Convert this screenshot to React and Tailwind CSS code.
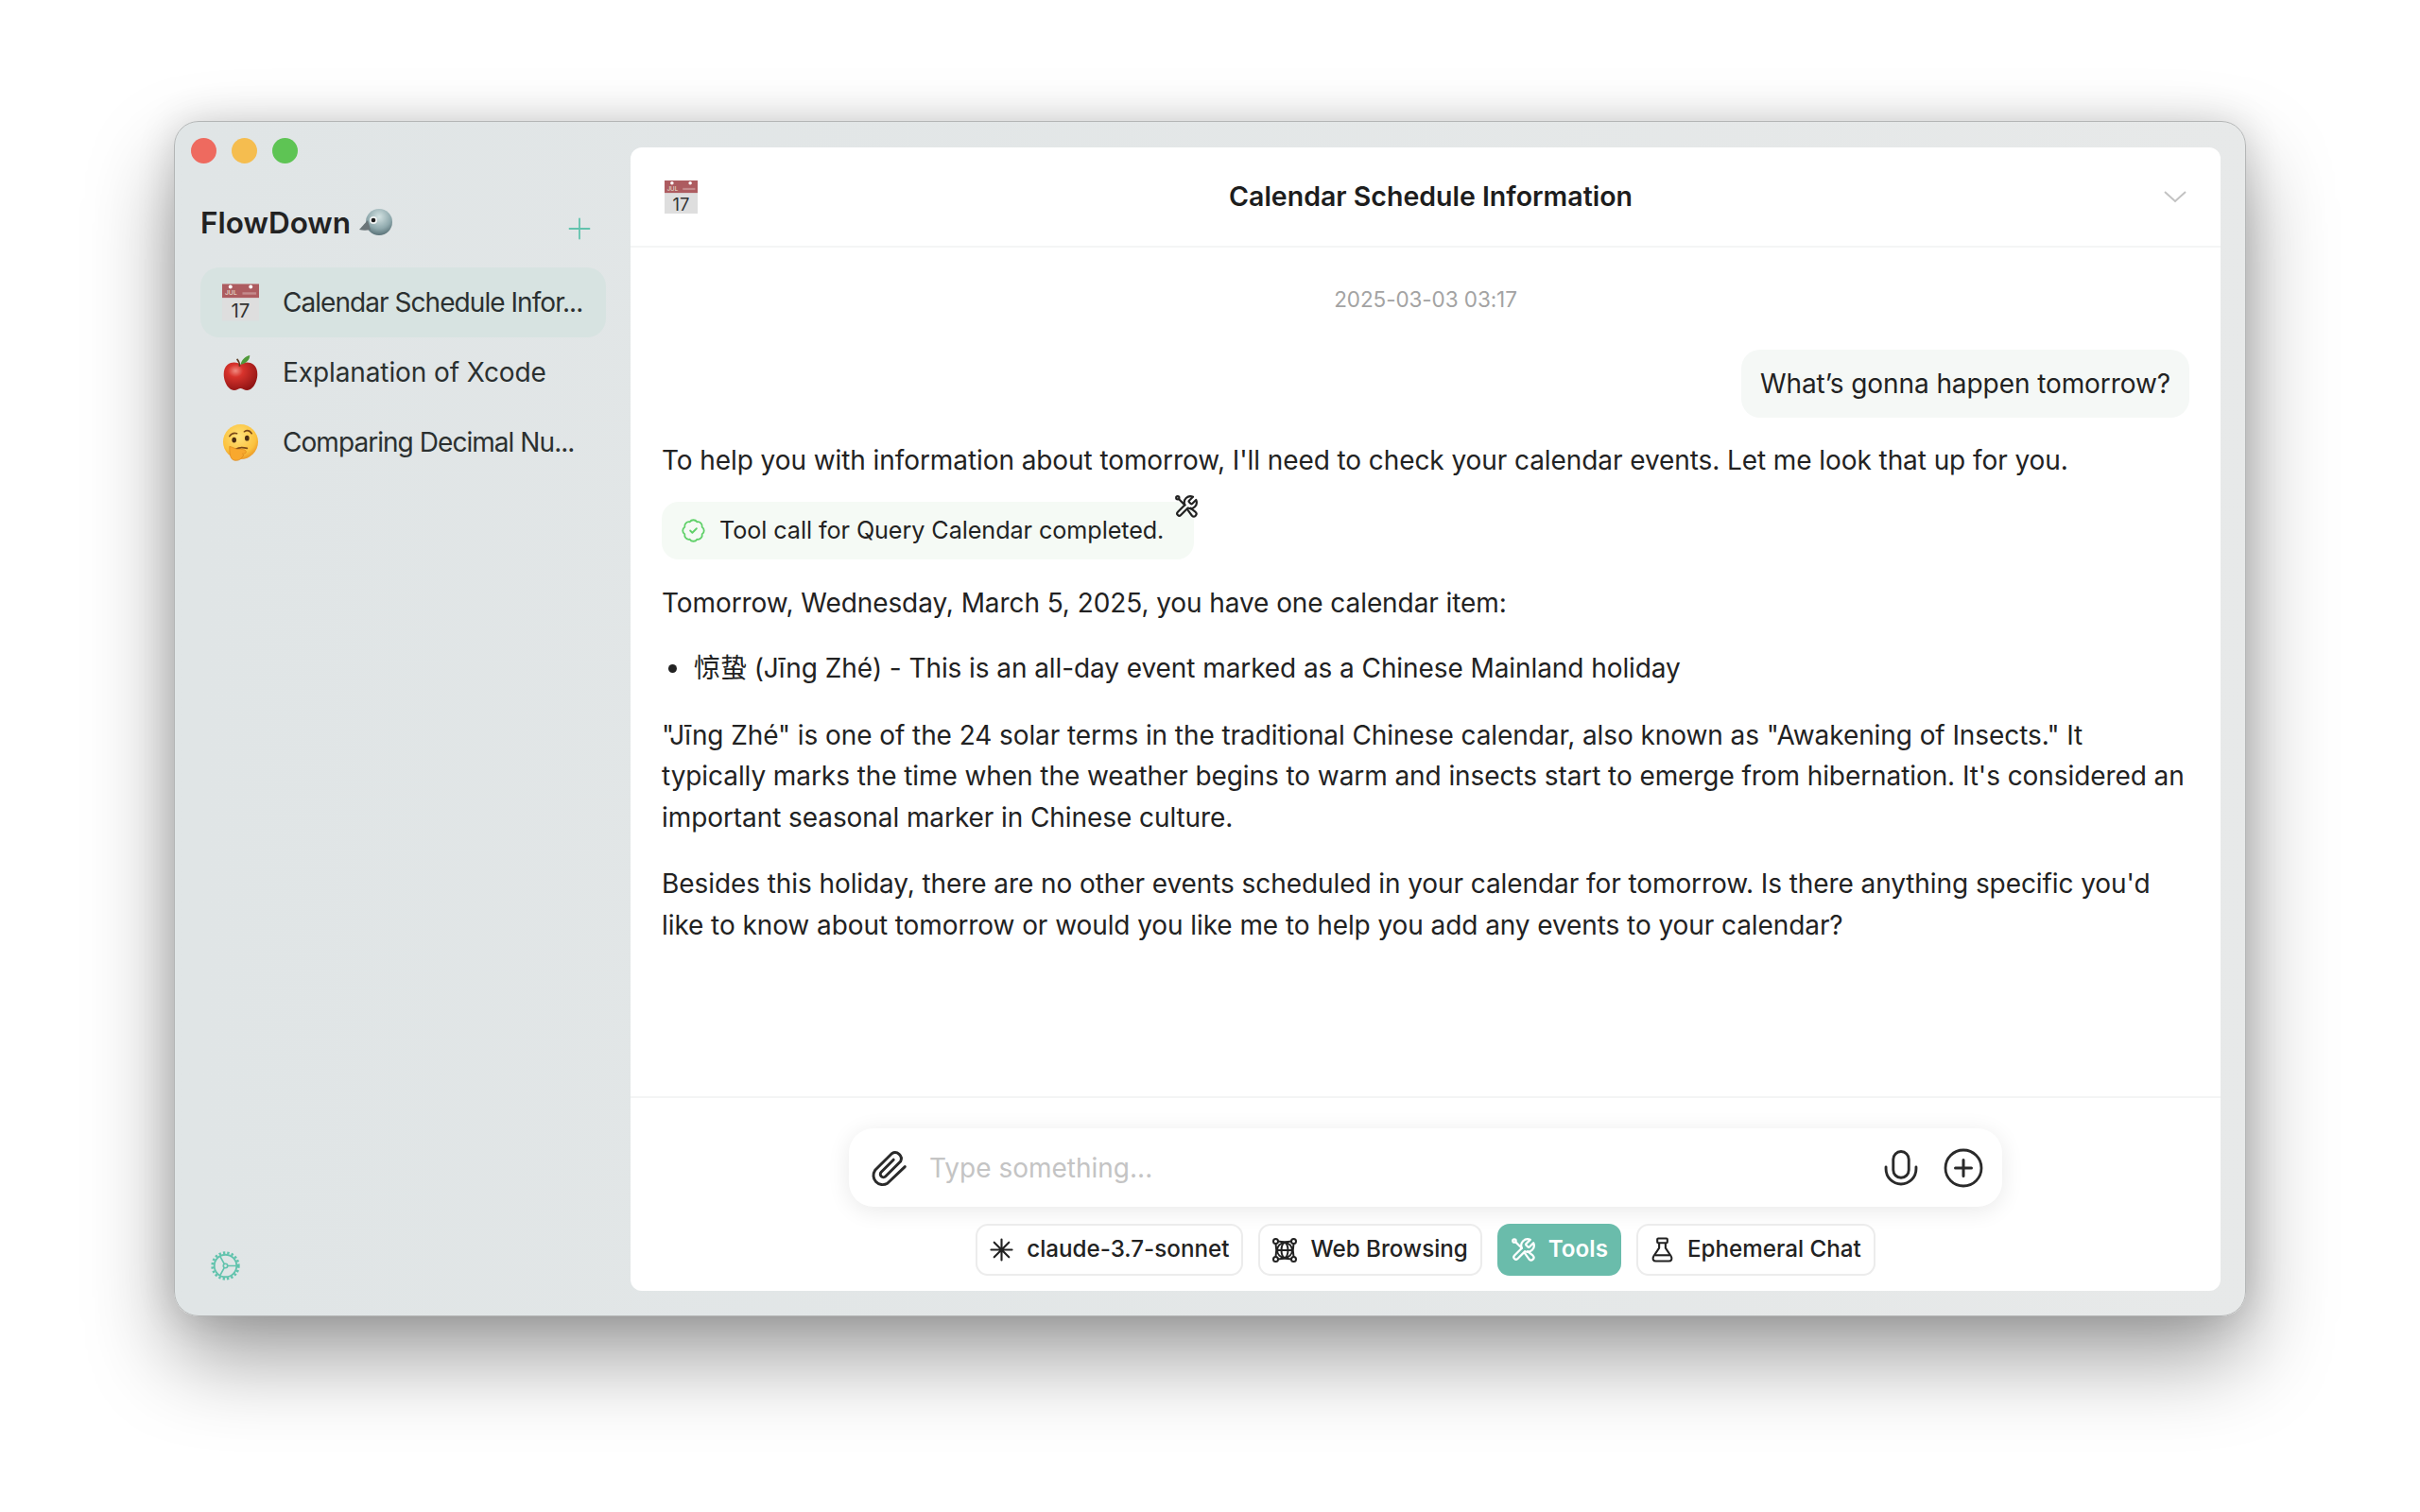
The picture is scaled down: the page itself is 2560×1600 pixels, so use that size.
import React from "react";
import { BadgeCheck, Plus } from "lucide-react";

function CalendarEmoji({ className }) {
  return (
    <svg viewBox="0 0 40 40" className={className}>
      <rect x="0" y="0" width="40" height="40" fill="#dedede" />
      <rect x="0" y="0" width="40" height="15" fill="#ad5c60" />
      <circle cx="9" cy="3" r="2" fill="#fff" />
      <circle cx="31" cy="3" r="2" fill="#fff" />
      <text x="3" y="12" fontSize="7" fill="#eed" fontFamily="Inter, sans-serif">JUL</text>
      <rect x="22" y="9" width="15" height="2.5" fill="#c48a8c" />
      <text x="20" y="36" fontSize="21" fill="#333" textAnchor="middle" fontFamily="Inter, sans-serif">17</text>
    </svg>
  );
}

function AppleEmoji({ className }) {
  return (
    <svg viewBox="0 0 40 40" className={className}>
      <defs>
        <radialGradient id="ap" cx="35%" cy="30%" r="75%">
          <stop offset="0" stopColor="#f08a80" />
          <stop offset="0.3" stopColor="#d8332c" />
          <stop offset="1" stopColor="#8f1414" />
        </radialGradient>
      </defs>
      <path d="M20 11c-4-3-10-3-14 0-5 4-5 12-3 18 2 6 6 10 10 10 3 0 5-2 7-2s4 2 7 2c4 0 8-4 10-10 2-6 2-14-3-18-4-3-10-3-14 0z" fill="url(#ap)" />
      <path d="M20 11c1-5 5-9 10-10 0 5-4 9-10 10z" fill="#4f9a3a" />
      <path d="M19 13c0-4-1-6-3-8" stroke="#5a3a20" strokeWidth="1.6" fill="none" />
    </svg>
  );
}

function ThinkEmoji({ className }) {
  return (
    <svg viewBox="0 0 40 40" className={className}>
      <defs>
        <radialGradient id="tk" cx="45%" cy="35%" r="70%">
          <stop offset="0" stopColor="#ffe27a" />
          <stop offset="0.7" stopColor="#fbc23e" />
          <stop offset="1" stopColor="#e88f22" />
        </radialGradient>
      </defs>
      <circle cx="20" cy="19" r="19" fill="url(#tk)" />
      <path d="M8 13c2-3 5-4 8-3" stroke="#7c4a1a" strokeWidth="1.6" fill="none" strokeLinecap="round" />
      <path d="M24 8c3-2 6-1 8 2" stroke="#7c4a1a" strokeWidth="1.6" fill="none" strokeLinecap="round" />
      <ellipse cx="13" cy="17" rx="2.4" ry="3" fill="#4a2c12" />
      <ellipse cx="27" cy="15" rx="2.4" ry="3" fill="#4a2c12" />
      <path d="M15 27c3-2 8-2 12-1" stroke="#7c4a1a" strokeWidth="1.8" fill="none" strokeLinecap="round" />
      <path d="M8 24c4 1 7 3 9 3 4 0 9 0 9 3 0 2-3 2-4 2 2 1 1 3 0 3-1 3-5 5-9 4-4-1-5-6-5-15z" fill="#f8a82e" stroke="#dd8a1e" strokeWidth="0.8" />
    </svg>
  );
}

function BirdEmoji({ className }) {
  return (
    <svg viewBox="0 0 36 30" className={className}>
      <defs>
        <radialGradient id="bd" cx="50%" cy="30%" r="75%">
          <stop offset="0" stopColor="#d3e2e2" />
          <stop offset="0.6" stopColor="#8fa9ad" />
          <stop offset="1" stopColor="#4e666c" />
        </radialGradient>
      </defs>
      <circle cx="21" cy="14" r="14" fill="url(#bd)" />
      <path d="M9 12L0 22c4 1 8 1 12 0z" fill="#6a7478" />
      <circle cx="15" cy="12" r="4" fill="#f0f3f2" />
      <circle cx="15" cy="12" r="2.3" fill="#1c1c1c" />
    </svg>
  );
}

function GearIcon({ className }) {
  return (
    <svg viewBox="0 0 30 30" className={className} fill="none" stroke="currentColor">
      <circle cx="15" cy="15" r="13.4" strokeWidth="2.6" strokeDasharray="2.3 2" />
      <circle cx="15" cy="15" r="11.4" strokeWidth="1.8" />
      <circle cx="15" cy="15" r="2.2" strokeWidth="1.5" />
      <path d="M17.2 15H26M13.9 13.1L9.6 5.5M13.9 16.9L9.6 24.5" strokeWidth="1.6" />
    </svg>
  );
}

function NetworkIcon({ className }) {
  return (
    <svg viewBox="0 0 26 26" className={className} fill="none" stroke="currentColor" strokeWidth="2">
      <circle cx="13" cy="13" r="8" />
      <ellipse cx="13" cy="13" rx="3.5" ry="8" />
      <path d="M5 13h16" />
      <circle cx="3.5" cy="3.5" r="2.5" />
      <circle cx="22.5" cy="3.5" r="2.5" />
      <circle cx="3.5" cy="22.5" r="2.5" />
      <circle cx="22.5" cy="22.5" r="2.5" />
      <path d="M6 3.5q7 1.500 14 0M6 22.500q7-1.500 14 0M3.500 6q1.500 7 0 14M22.500 6q-1.500 7 0 14" />
    </svg>
  );
}

function StarIcon({ className }) {
  return (
    <svg viewBox="0 0 26 26" className={className} fill="none" stroke="currentColor" strokeWidth="2.2" strokeLinecap="round">
      <path d="M13 1.5v23M1.5 13h23M4.900 4.900l16.200 16.200M21.100 4.900L4.900 21.100" />
    </svg>
  );
}

function FlaskIcon({ className }) {
  return (
    <svg viewBox="0 0 25 28" className={className} fill="none" stroke="currentColor" strokeWidth="2.2" strokeLinejoin="round">
      <rect x="7" y="1.500" width="11" height="5" rx="1" />
      <path d="M9 6.500V12L3 21c-1.800 3-.5 5.500 2.500 5.500h14c3 0 4.300-2.500 2.500-5.500l-6-9V6.500" />
      <path d="M4.500 20h16" />
    </svg>
  );
}

function ToolsIcon({ className }) {
  return (
    <svg viewBox="0 0 24 24" className={className} fill="none" stroke="currentColor" strokeWidth="2" strokeLinecap="round" strokeLinejoin="round">
      <path d="M14.700 6.300a1 1 0 0 0 0 1.400l1.600 1.600a1 1 0 0 0 1.400 0l3.770-3.770a6 6 0 0 1-7.940 7.940l-6.910 6.910a2.120 2.120 0 0 1-3-3l6.910-6.910a6 6 0 0 1 7.940-7.940l-3.760 3.760z" />
      <circle cx="3.500" cy="3.500" r="1.500" />
      <path d="M5 5l5.500 5.500M13.500 15.500l4 5.500a2 2 0 0 0 3.500-3.500l-5-4" />
    </svg>
  );
}

function ClipIcon({ className }) {
  return (
    <svg viewBox="10 7 42 45" className={className} fill="none" stroke="currentColor" strokeWidth="3.200" strokeLinecap="round" strokeLinejoin="round">
      <path d="M48 28L28 47A10.500 10.500 0 0 1 14 32L33 13A7 7 0 0 1 43 22L26 39A3.500 3.500 0 0 1 21 34L35 20" />
    </svg>
  );
}

function MicIcon({ className }) {
  return (
    <svg viewBox="0 0 35 37" className={className} fill="none" stroke="currentColor" strokeWidth="2.800" strokeLinecap="round">
      <rect x="9.500" y="1.500" width="16" height="27" rx="8" />
      <path d="M2 17.500v2a15.500 15.500 0 0 0 31 0v-2" />
    </svg>
  );
}

function PlusCircleIcon({ className }) {
  return (
    <svg viewBox="0 0 42 42" className={className} fill="none" stroke="currentColor" strokeWidth="2.800" strokeLinecap="round">
      <circle cx="21" cy="21" r="19" />
      <path d="M12.500 21h17M21 12.500v17" strokeWidth="3" />
    </svg>
  );
}

function Chevron({ className }) {
  return (
    <svg viewBox="0 0 24 13" className={className} fill="none" stroke="currentColor" strokeWidth="2">
      <path d="M1 1l11 10L23 1" />
    </svg>
  );
}

function Chip({ icon, label, active }) {
  return (
    <div
      className={
        active
          ? "flex h-[55px] items-center gap-[13px] rounded-[13px] bg-[#6abcab] px-[14px] text-[24.200px] font-semibold text-white"
          : "flex h-[55px] items-center gap-[14px] rounded-[13px] border-2 border-[#ececec] bg-white px-[13px] text-[24.200px] font-medium text-[#222]"
      }
    >
      {icon}
      <span>{label}</span>
    </div>
  );
}

function SideRow({ icon, label, active, tight }) {
  return (
    <div
      className={
        (active ? "bg-[#d7e3e1] " : "") +
        "flex h-[74px] items-center gap-[25px] whitespace-nowrap rounded-[20px] pl-[23px] text-[28px] text-[#2b3030]"
      }
    >
      <span className="flex w-[39px] justify-center">{icon}</span>
      <span className={tight ? "tracking-[-0.95px]" : "tracking-[-0.1px]"}>{label}</span>
    </div>
  );
}

export default function App() {
  return (
    <div className="flex h-[1600px] justify-center overflow-hidden bg-white pt-[128px] font-[Inter,'Noto_Sans_CJK_SC',sans-serif] antialiased">
      <div className="flex h-[1265px] w-[2192px] rounded-[26px] border border-[#b3b5b5] bg-gradient-to-r from-[#e0e5e6] to-[#e7e9e9] shadow-[0_44px_90px_rgba(0,0,0,0.38),0_0_40px_rgba(0,0,0,0.14)]">
        <aside className="flex w-[482px] shrink-0 flex-col pl-[27px] pr-[26px] pt-[17px] pb-[37px]">
          <div className="-ml-[10px] flex gap-[16px]">
            <span className="h-[27px] w-[27px] rounded-full bg-[#ee6a5f]" />
            <span className="h-[27px] w-[27px] rounded-full bg-[#f5bd4f]" />
            <span className="h-[27px] w-[27px] rounded-full bg-[#5ec454]" />
          </div>
          <div className="mt-[42px] flex h-[42px] items-center justify-between">
            <div className="flex items-center gap-[9px] text-[31.500px] font-semibold leading-[40px] text-[#222]">
              <span>FlowDown</span>
              <BirdEmoji className="h-[30px] w-[36px]" />
            </div>
            <Plus className="-my-[3px] mr-[10px] mt-[9px] h-[36px] w-[36px] text-[#62c3ad]" strokeWidth={1.2} />
          </div>
          <div className="mt-[26px] flex flex-col">
            <SideRow active tight icon={<CalendarEmoji className="h-[40px] w-[40px]" />} label="Calendar Schedule Infor..." />
            <SideRow icon={<AppleEmoji className="h-[39px] w-[39px]" />} label="Explanation of Xcode" />
            <SideRow tight icon={<ThinkEmoji className="h-[39px] w-[39px]" />} label="Comparing Decimal Nu..." />
          </div>
          <div className="mt-auto pl-[11px]">
            <GearIcon className="h-[31px] w-[31px] text-[#62c3ad]" />
          </div>
        </aside>
        <main className="mb-[26px] mr-[26px] mt-[27px] flex min-w-0 flex-1 flex-col rounded-[12px] bg-white">
          <header className="relative flex h-[106px] shrink-0 items-center border-b-2 border-[#f4f5f5] px-[36px]">
            <CalendarEmoji className="h-[35px] w-[35px]" />
            <h1 className="flex-1 text-center text-[28.500px] font-semibold text-[#1d1d1d]">Calendar Schedule Information</h1>
            <Chevron className="h-[13px] w-[24px] text-[#c2c2c2]" />
          </header>
          <div className="flex min-h-0 flex-1 flex-col px-[33px] text-[28px] leading-[43.500px] tracking-[-0.08px] text-[#222]">
            <div className="mt-[40px] text-center text-[22.500px] leading-[30px] text-[#a3a3a3]">2025-03-03 03:17</div>
            <div className="mt-[38px] self-end rounded-[20px] bg-[#f5f8f6] px-[20px] py-[14px] leading-[44px]">What’s gonna happen tomorrow?</div>
            <p className="mt-[24px]">To help you with information about tomorrow, I'll need to check your calendar events. Let me look that up for you.</p>
            <div className="relative mt-[21px] flex h-[61px] w-fit items-center gap-[14px] rounded-[18px] bg-[#f5faf5] pl-[20px] pr-[32px] text-[25.200px]">
              <BadgeCheck className="h-[27px] w-[27px] text-[#5fd068]" strokeWidth={1.6} />
              <span className="pt-[2px]">Tool call for Query Calendar completed.</span>
              <ToolsIcon className="absolute -top-[8px] -right-[5px] h-[26px] w-[26px] text-[#222]" />
            </div>
            <p className="mt-[25px]">Tomorrow, Wednesday, March 5, 2025, you have one calendar item:</p>
            <div className="mt-[26px] flex items-center">
              <span className="ml-[7px] mr-[18px] h-[9px] w-[9px] rounded-full bg-[#222]" />
              <span>惊蛰 (Jīng Zhé) - This is an all-day event marked as a Chinese Mainland holiday</span>
            </div>
            <p className="mt-[27px]">"Jīng Zhé" is one of the 24 solar terms in the traditional Chinese calendar, also known as "Awakening of Insects." It typically marks the time when the weather begins to warm and insects start to emerge from hibernation. It's considered an important seasonal marker in Chinese culture.</p>
            <p className="mt-[27px]">Besides this holiday, there are no other events scheduled in your calendar for tomorrow. Is there anything specific you'd like to know about tomorrow or would you like me to help you add any events to your calendar?</p>
          </div>
          <footer className="flex shrink-0 flex-col items-center border-t-2 border-[#f4f5f5] pb-[16px] pt-[32px]">
            <div className="flex h-[83px] w-[1220px] items-center rounded-[26px] bg-white pl-[24px] pr-[20px] shadow-[0_4px_24px_rgba(0,0,0,0.09)]">
              <ClipIcon className="h-[42px] w-[39px] text-[#2a2a2a]" />
              <span className="ml-[22px] flex-1 text-[28px] text-[#c4c4c4]">Type something...</span>
              <MicIcon className="h-[40px] w-[36px] text-[#2a2a2a]" />
              <PlusCircleIcon className="ml-[27px] h-[42px] w-[42px] text-[#2a2a2a]" />
            </div>
            <div className="mt-[18px] flex gap-[16px]">
              <Chip icon={<StarIcon className="h-[25px] w-[25px]" />} label="claude-3.7-sonnet" />
              <Chip icon={<NetworkIcon className="h-[26px] w-[26px]" />} label="Web Browsing" />
              <Chip active icon={<ToolsIcon className="h-[27px] w-[27px]" />} label="Tools" />
              <Chip icon={<FlaskIcon className="h-[27px] w-[25px]" />} label="Ephemeral Chat" />
            </div>
          </footer>
        </main>
      </div>
    </div>
  );
}
